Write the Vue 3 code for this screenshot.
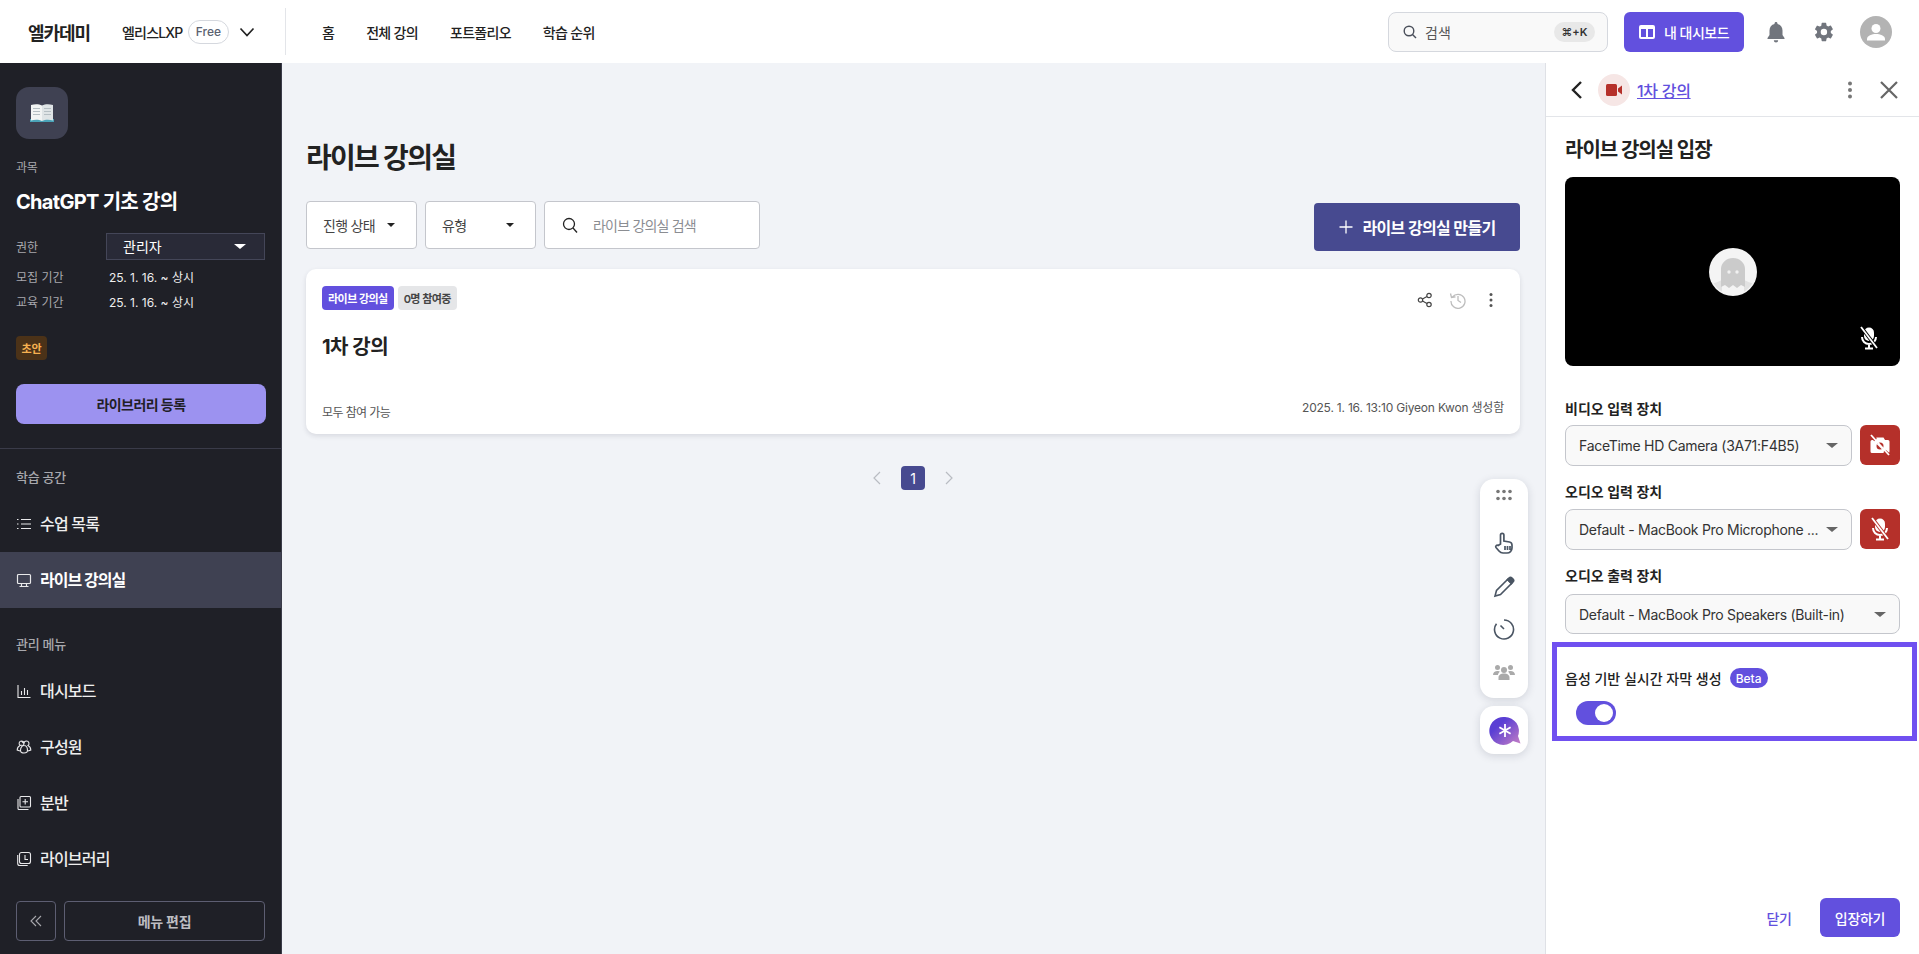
<script setup>
const menuA = [{ t: '수업 목록', i: 'list' }, { t: '라이브 강의실', i: 'monitor', active: true }]
const menuB = [{ t: '대시보드', i: 'chart' }, { t: '구성원', i: 'people' }, { t: '분반', i: 'copy' }, { t: '라이브러리', i: 'lib' }]
const nav = ['홈', '전체 강의', '포트폴리오', '학습 순위']
</script>

<template>
  <div class="page">
    <header class="top">
      <div class="logo">엘카데미</div>
      <div class="org">엘리스LXP</div>
      <div class="free">Free</div>
      <svg class="chev" width="16" height="16" viewBox="0 0 16 16" fill="none" stroke="#222" stroke-width="1.7"><path d="M1.5 4.5 8 11.5l6.5-7" /></svg>
      <div class="vline"></div>
      <nav class="nav"><a v-for="n in nav" :key="n">{{ n }}</a></nav>
      <div class="search">
        <svg width="16" height="16" viewBox="0 0 16 16" fill="none" stroke="#4a4f5a" stroke-width="1.4"><circle cx="7" cy="7" r="4.8" /><path d="m10.5 10.5 3.5 3.5" /></svg>
        <span class="stext">검색</span>
        <span class="kbd">⌘+K</span>
      </div>
      <button class="dash">
        <svg width="16" height="16" viewBox="0 0 16 16"><path fill="#fff" fill-rule="evenodd" d="M2 1h12a2 2 0 0 1 2 2v10a2 2 0 0 1-2 2H2a2 2 0 0 1-2-2V3a2 2 0 0 1 2-2Zm0 4v8h5V5Zm7 0v8h5V5Z" /></svg>
        내 대시보드
      </button>
      <svg class="tico" width="20" height="22" viewBox="0 0 20 22"><path fill="#71757d" d="M10 1c.9 0 1.5.6 1.5 1.5v.4C14.600 3.600 16.500 6.200 16.500 9.500V14l2 3v1h-17v-1l2-3V9.500c0-3.300 1.900-5.900 5-6.600v-.4C8.500 1.600 9.100 1 10 1ZM7.800 19.200h4.400a2.200 2.200 0 0 1-4.400 0Z" /></svg>
      <svg class="tico gear" width="22" height="22" viewBox="0 0 24 24"><path fill="#71757d" d="M19.400 13c.04-.33.06-.66.06-1s-.02-.67-.06-1l2.100-1.650a.5.500 0 0 0 .12-.64l-2-3.460a.5.500 0 0 0-.61-.22l-2.490 1a7.300 7.300 0 0 0-1.730-1l-.38-2.650A.5.500 0 0 0 13.920 2h-4a.5.500 0 0 0-.49.42L9.050 5.070a7.700 7.700 0 0 0-1.730 1l-2.490-1a.5.500 0 0 0-.61.22l-2 3.460a.5.500 0 0 0 .12.64L4.440 11a7.800 7.800 0 0 0 0 2l-2.100 1.650a.5.500 0 0 0-.12.64l2 3.460c.12.22.38.3.61.22l2.490-1c.53.41 1.110.74 1.730 1l.38 2.650c.04.24.25.42.49.42h4c.25 0 .45-.18.49-.42l.38-2.650a7.700 7.700 0 0 0 1.730-1l2.490 1c.23.08.49 0 .61-.22l2-3.460a.5.500 0 0 0-.12-.64ZM11.920 15.500a3.500 3.500 0 1 1 0-7 3.500 3.500 0 0 1 0 7Z" /></svg>
      <svg class="avatar" width="32" height="32" viewBox="0 0 32 32"><circle cx="16" cy="16" r="16" fill="#b3b3b3" /><circle cx="16" cy="12.500" r="4.500" fill="#fff" /><path fill="#fff" d="M7 23c0-3.500 5-5 9-5s9 1.500 9 5v1.500H7Z" /></svg>
    </header>

    <div class="body">
      <aside class="side">
        <div class="side-head">
          <div class="cover">
            <svg width="24" height="20" viewBox="0 0 24 20"><path fill="#4aa3b8" d="M0 16h24v3H0z" /><path fill="#f2f4f4" d="M1 2c4-1.200 8-1 11 .5V18c-3-1.500-7-1.700-11-.5Z" /><path fill="#dfe4e6" d="M23 2c-4-1.200-8-1-11 .5V18c3-1.500 7-1.700 11-.5Z" /><path stroke="#b5bec3" stroke-width="1" d="M3 5.500h7M3 8.500h7M3 11.500h7M14 5.500h7M14 8.500h7M14 11.500h7" /></svg>
          </div>
          <div class="eyebrow">과목</div>
          <h2 class="course">ChatGPT 기초 강의</h2>
          <div class="meta first">
            <span class="mk">권한</span>
            <div class="role"><span>관리자</span><i class="caret white"></i></div>
          </div>
          <div class="meta"><span class="mk">모집 기간</span><span class="mv">25. 1. 16. ~ 상시</span></div>
          <div class="meta second"><span class="mk">교육 기간</span><span class="mv">25. 1. 16. ~ 상시</span></div>
          <div class="draft">초안</div>
          <button class="reg">라이브러리 등록</button>
        </div>
        <div class="side-list">
          <div class="sec">학습 공간</div>
          <div v-for="m in menuA" :key="m.t" class="row" :class="{ active: m.active }">
            <svg width="16" height="16" viewBox="0 0 16 16" fill="none" stroke="#e8e8ea" stroke-width="1.200">
              <path v-if="m.i === 'list'" d="M5 3.500h10M5 8h10M5 12.500h10M1 3.500h1.500M1 8h1.500M1 12.500h1.500" />
              <path v-else d="M2.500 2.500h11a1 1 0 0 1 1 1v7a1 1 0 0 1-1 1h-11a1 1 0 0 1-1-1v-7a1 1 0 0 1 1-1ZM5.500 11.500v3h5v-3M3.500 14.500h9" />
            </svg>
            <span>{{ m.t }}</span>
          </div>
          <div class="sec sec2">관리 메뉴</div>
          <div v-for="m in menuB" :key="m.t" class="row">
            <svg width="16" height="16" viewBox="0 0 16 16" fill="none" stroke="#e8e8ea" stroke-width="1.100">
              <path v-if="m.i === 'chart'" d="M2 2v12.500h12.500M5.500 12V8M8.500 12V5M11.500 12V7" />
              <path v-else-if="m.i === 'people'" d="M5.500 2a2.500 2.500 0 0 1 2.500 2.500A2.500 2.500 0 0 1 10.500 2a2.500 2.500 0 0 1 1.500 4.500c2 1 2.800 3 2.800 4.500l-2.800 1M8 4.500a2.500 2.500 0 0 1-1 2c-2-.5-3 0-3-.1A2.500 2.500 0 0 1 5.500 2ZM8 6.500c2 0 3.500 2 3.500 5 0 2-1.500 2.500-3.500 2.500s-3.500-.5-3.500-2.500c0-3 1.500-5 3.500-5ZM4 6.500C2 7.500 1.200 9.500 1.200 11l2.800 1" />
              <path v-else-if="m.i === 'copy'" d="M5 1.500h8.500a1 1 0 0 1 1 1V11a1 1 0 0 1-1 1H5a1 1 0 0 1-1-1V2.500a1 1 0 0 1 1-1ZM2 4v9.500a1 1 0 0 0 1 1h9.500M9.200 4v5.500M6.500 6.700H12" />
              <path v-else d="M5.500 1.500h7a2 2 0 0 1 2 2v7a2 2 0 0 1-2 2h-7a2 2 0 0 1-2-2v-7a2 2 0 0 1 2-2ZM1.700 4v8.500a2 2 0 0 0 2 2h8M9 4v4.500h3" />
            </svg>
            <span>{{ m.t }}</span>
          </div>
        </div>
        <div class="side-foot">
          <button class="collapse">
            <svg width="14" height="14" viewBox="0 0 14 14" fill="none" stroke="#a8a8ad" stroke-width="1.100"><path d="M7 2 2 7l5 5M12 2 7 7l5 5" /></svg>
          </button>
          <button class="edit">메뉴 편집</button>
        </div>
      </aside>

      <main class="main">
        <h1 class="title">라이브 강의실</h1>
        <div class="filters">
          <div class="fbox w111"><span>진행 상태</span><i class="caret"></i></div>
          <div class="fbox w111"><span>유형</span><i class="caret"></i></div>
          <div class="fsearch">
            <svg width="18" height="18" viewBox="0 0 18 18" fill="none" stroke="#222" stroke-width="1.300"><circle cx="8" cy="8" r="5.500" /><path d="m12 12 4 4.500" /></svg>
            <span>라이브 강의실 검색</span>
          </div>
          <button class="create">
            <svg width="14" height="14" viewBox="0 0 14 14" stroke="#fff" stroke-width="1.300"><path d="M7 .5v13M.5 7h13" /></svg>
            라이브 강의실 만들기
          </button>
        </div>
        <section class="card">
          <div class="card-top">
            <div class="tags"><span class="tag p">라이브 강의실</span><span class="tag g">0명 참여중</span></div>
            <div class="acts">
              <svg width="16" height="16" viewBox="0 0 16 16" fill="none" stroke="#444" stroke-width="1.200"><circle cx="3.500" cy="8" r="2.200" /><circle cx="12" cy="3.500" r="2.200" /><circle cx="12" cy="12.500" r="2.200" /><path d="m5.500 7 4.500-2.500M5.500 9l4.500 2.500" /></svg>
              <svg width="18" height="18" viewBox="0 0 18 18" fill="none" stroke="#bdbdbd" stroke-width="1.300"><path d="M3.500 6A7 7 0 1 1 2 10M1.500 2.500 2.500 6.500l4-.7M9 5v4.500l3 2" /></svg>
              <svg width="16" height="16" viewBox="0 0 16 16" fill="#555"><circle cx="8" cy="2.500" r="1.500" /><circle cx="8" cy="8" r="1.500" /><circle cx="8" cy="13.500" r="1.500" /></svg>
            </div>
          </div>
          <h3 class="ctitle">1차 강의</h3>
          <div class="cfoot">
            <span class="open">모두 참여 가능</span>
            <span class="date">2025. 1. 16. 13:10 Giyeon Kwon 생성함</span>
          </div>
        </section>
        <div class="pager">
          <svg width="10" height="14" viewBox="0 0 10 14" fill="none" stroke="#b9bcc2" stroke-width="1.200"><path d="M8 1 2 7l6 6" /></svg>
          <span class="pg">1</span>
          <svg width="10" height="14" viewBox="0 0 10 14" fill="none" stroke="#b9bcc2" stroke-width="1.200"><path d="m2 1 6 6-6 6" /></svg>
        </div>

        <div class="float-wrap">
          <div class="tools">
            <svg width="18" height="12" viewBox="0 0 18 12" fill="#777"><circle cx="3" cy="2.500" r="1.800" /><circle cx="9" cy="2.500" r="1.800" /><circle cx="15" cy="2.500" r="1.800" /><circle cx="3" cy="9.500" r="1.800" /><circle cx="9" cy="9.500" r="1.800" /><circle cx="15" cy="9.500" r="1.800" /></svg>
            <svg class="t-hand" width="20" height="22" viewBox="0 0 20 22" fill="none" stroke="#4a5563" stroke-width="1.700"><path d="M6.500 12V3a1.700 1.700 0 0 1 3.400 0v6l5.600 1c1.500.3 2.500 1.300 2.500 3v3a5 5 0 0 1-5 5H9c-1.800 0-3-.8-4-2l-3-3.500c-1-1.500.8-3 2.200-2ZM11 14v4M13.500 14v4M16 14v4" /></svg>
            <svg class="t-pen" width="22" height="22" viewBox="0 0 22 22" fill="none" stroke="#4a5563" stroke-width="1.600"><path d="M14.500 3.500 3.500 14.500 2 20l5.500-1.500 11-11Z" /><path fill="#4a5563" d="M14.500 3.500 16 2c1-1 2-1 3 0l1 1c1 1 1 2 0 3l-1.500 1.500Z" /></svg>
            <svg class="t-timer" width="22" height="22" viewBox="0 0 22 22" fill="none" stroke="#4a5563" stroke-width="1.600"><path d="M11 2a9.500 9.500 0 1 1-7.500 3.700M11 11 7.500 7.500" /></svg>
            <svg class="t-ppl" width="22" height="16" viewBox="0 0 22 16" fill="#aaa"><circle cx="4.500" cy="3.500" r="2.500" /><circle cx="17.500" cy="3.500" r="2.500" /><circle cx="11" cy="6" r="3" /><path d="M0 11c0-2.500 2-4 4.500-4 1 0 2 .3 2.500.8C5.500 9 5 10 5 11Zm17 0c0-1-.5-2-2-3.200.500-.5 1.500-.8 2.500-.8C20 7 22 8.500 22 11ZM5.500 16v-2.500c0-2.500 2.500-4 5.500-4s5.500 1.500 5.500 4V16Z" /></svg>
          </div>
          <div class="assist">
            <svg class="a-logo" width="32" height="32" viewBox="0 0 32 32">
              <defs><linearGradient id="ag" x1="0" y1="0" x2="1" y2="1"><stop offset=".3" stop-color="#5a3fd4" /><stop offset="1" stop-color="#c67fc4" /></linearGradient></defs>
              <path fill="url(#ag)" d="M16 2a14 14 0 0 1 13 19l2.500 7.500-7.500-2.500A14 14 0 1 1 16 2Z" />
              <path stroke="#fff" stroke-width="1.800" d="M16 9v13M10.400 12.250l11.200 6.500M21.600 12.250l-11.200 6.500" />
            </svg>
          </div>
        </div>
      </main>

      <aside class="panel">
        <div class="p-head">
          <svg class="p-back" width="14" height="20" viewBox="0 0 14 20" fill="none" stroke="#222" stroke-width="2.400"><path d="M11 2 3 10l8 8" /></svg>
          <div class="p-ico">
            <svg width="16" height="12" viewBox="0 0 16 12" fill="#b5302a"><rect width="11" height="12" rx="1.500" /><path d="m12 4.500 4-3v9l-4-3Z" /></svg>
          </div>
          <a class="p-title">1차 강의</a>
          <svg class="p-dots" width="6" height="18" viewBox="0 0 6 18" fill="#777"><circle cx="3" cy="2.500" r="2" /><circle cx="3" cy="9" r="2" /><circle cx="3" cy="15.500" r="2" /></svg>
          <svg class="p-x" width="18" height="18" viewBox="0 0 18 18" stroke="#666" stroke-width="2.200"><path d="m1 1 16 16M17 1 1 17" /></svg>
        </div>
        <div class="p-body">
          <h2 class="p-h">라이브 강의실 입장</h2>
          <div class="video">
            <svg class="ghost" width="48" height="48" viewBox="0 0 48 48">
              <clipPath id="gc"><circle cx="24" cy="24" r="22.500" /></clipPath>
              <circle cx="24" cy="24" r="24" fill="#f4f4f4" />
              <g clip-path="url(#gc)">
                <path fill="#e2e2e2" d="M0 36c5 0 9-2 13-4v16H0Zm48 0c-5 0-9-2-13-4v16h13Z" />
                <path fill="#cbcbcb" d="M12 39V21a12 11 0 0 1 24 0v18l-4-2-4 3-4-3-4 3-4-3Z" />
                <circle cx="20" cy="24" r="1.700" fill="#f1f1f1" /><circle cx="28" cy="24" r="1.700" fill="#f1f1f1" />
              </g>
            </svg>
            <svg class="vmic" width="20" height="24" viewBox="0 0 20 24"><rect x="5" y="1.500" width="10" height="13.500" rx="5" fill="#fff" /><path fill="none" stroke="#fff" stroke-width="2" d="M3 11c0 4 3 7 7 7s7-3 7-7M10 18v4M6 22.500h8" /><path stroke="#000" stroke-width="3.600" d="m2 1 16 21" /><path stroke="#fff" stroke-width="1.800" d="m2 1 16 21" /></svg>
          </div>
          <label class="f-l l1">비디오 입력 장치</label>
          <div class="f-row">
            <div class="sel"><span>FaceTime HD Camera (3A71:F4B5)</span><i class="caret gray"></i></div>
            <button class="off">
              <svg width="24" height="24" viewBox="0 0 24 24"><path fill="#fff" d="M4 7h3l1.500-2.500h7L17 7h3a1.500 1.500 0 0 1 1.500 1.500v10A1.500 1.500 0 0 1 20 20H4a1.500 1.500 0 0 1-1.500-1.500v-10A1.500 1.500 0 0 1 4 7Z" /><circle cx="12" cy="13" r="3.500" fill="#b5302a" /><path stroke="#fff" stroke-width="1.800" d="m9.500 10.500 5 5" /><path stroke="#b5302a" stroke-width="3.600" d="m3 2 4.500 5M16.500 18l4.500 4" /><path stroke="#fff" stroke-width="1.800" d="m3 2 18 20" /></svg>
            </button>
          </div>
          <label class="f-l">오디오 입력 장치</label>
          <div class="f-row">
            <div class="sel"><span>Default - MacBook Pro Microphone ...</span><i class="caret gray"></i></div>
            <button class="off">
              <svg width="20" height="24" viewBox="0 0 20 24"><rect x="5" y="1.500" width="10" height="13.500" rx="5" fill="#fff" /><path fill="none" stroke="#fff" stroke-width="2" d="M3 11c0 4 3 7 7 7s7-3 7-7M10 18v4M6 22.500h8" /><path stroke="#b5302a" stroke-width="3.600" d="m2 1 16 21" /><path stroke="#fff" stroke-width="1.800" d="m2 1 16 21" /></svg>
            </button>
          </div>
          <label class="f-l l3">오디오 출력 장치</label>
          <div class="f-row">
            <div class="sel s3"><span>Default - MacBook Pro Speakers (Built-in)</span><i class="caret gray"></i></div>
          </div>
          <div class="hl">
            <div class="hl-t"><span>음성 기반 실시간 자막 생성</span><span class="beta">Beta</span></div>
            <div class="toggle"><i></i></div>
          </div>
          <div class="p-foot">
            <button class="close">닫기</button>
            <button class="enter">입장하기</button>
          </div>
        </div>
      </aside>
    </div>
  </div>
</template>

<style>
html, body { margin: 0; overflow: hidden; background: #fff; }
</style>

<style scoped>
* { box-sizing: border-box; }
.page { width: 1919px; height: 954px; display: flex; flex-direction: column; font-family: Inter, "Noto Sans CJK KR", sans-serif; color: #222; overflow: hidden; }
button { font-family: inherit; cursor: pointer; }
h1, h2, h3 { margin: 0; }

.top { height: 63px; flex: none; display: flex; align-items: center; background: #fff; padding-left: 28px; }
.logo { font-size: 18px; font-weight: 700; width: 94px; letter-spacing: -1.1px; }
.org { font-size: 14px; font-weight: 500; width: 66px; letter-spacing: -.8px; }
.free { width: 41px; height: 24px; border: 1px solid #d5d8de; border-radius: 12px; font-size: 12px; font-weight: 500; color: #5b6270; display: flex; align-items: center; justify-content: center; }
.chev { margin-left: 10px; }
.vline { width: 1px; height: 47px; background: #e3e5e9; margin-left: 30px; }
.nav { display: flex; gap: 32px; margin-left: 36px; font-size: 14px; font-weight: 500; letter-spacing: -.7px; }
.search { margin-left: auto; width: 220px; height: 40px; border: 1px solid #d5d8de; border-radius: 8px; background: #f9f9f9; display: flex; align-items: center; padding-left: 13px; font-size: 14px; color: #555; }
.stext { margin-left: 7px; }
.kbd { margin-left: auto; margin-right: 12px; width: 41px; height: 20px; border-radius: 10px; background: #e8e8e8; font-size: 11px; font-weight: 600; display: flex; align-items: center; justify-content: center; color: #333; }
.dash { width: 120px; height: 40px; margin-left: 16px; border: 0; border-radius: 6px; background: #6250de; color: #fff; font-size: 14px; font-weight: 500; letter-spacing: -.5px; display: flex; align-items: center; justify-content: center; gap: 9px; }
.tico { margin-left: 22px; flex: none; }
.gear { margin-left: 27px; }
.avatar { margin-left: 25px; margin-right: 27px; flex: none; }

.body { flex: 1; display: flex; min-height: 0; }

.side { width: 282px; flex: none; background: #1f2027; border-right: 1px solid #3a3b49; color: #fff; display: flex; flex-direction: column; }
.side-head { padding: 24px 16px; border-bottom: 1px solid #3a3b49; height: 386px; }
.cover { width: 52px; height: 52px; border-radius: 13px; background: #3f4152; display: flex; align-items: center; justify-content: center; }
.eyebrow { margin-top: 20px; font-size: 12px; line-height: 18px; color: #a8a8ad; letter-spacing: -.3px; }
.course { margin-top: 11px; font-size: 20px; line-height: 28px; font-weight: 700; letter-spacing: -.7px; }
.meta { display: flex; align-items: center; height: 20px; margin-top: 5px; font-size: 12px; }
.meta.first { height: 26px; margin-top: 17px; margin-bottom: 7px; }
.mk { width: 90px; color: #a8a8ad; flex: none; font-size: 12px; }
.mv { padding-left: 3px; color: #eee; font-size: 12px; }
.role { width: 161px; height: 27px; background: #292a37; border: 1px solid #444658; display: flex; align-items: center; justify-content: space-between; padding: 0 18px 0 16px; font-size: 14px; }
.draft { margin-top: 25px; width: 31px; height: 24px; border-radius: 4px; background: #4b3218; color: #f7b151; font-size: 11px; font-weight: 700; display: flex; align-items: center; justify-content: center; }
.reg { display: block; margin-top: 24px; width: 250px; height: 40px; border: 0; border-radius: 8px; background: #9c92f0; color: #1f2027; font-size: 14px; font-weight: 600; letter-spacing: -.6px; }
.side-list { padding-top: 18px; }
.sec { padding-left: 16px; height: 20px; line-height: 20px; font-size: 13px; font-weight: 500; color: #a8a8ad; margin-bottom: 9px; letter-spacing: -.3px; }
.sec2 { margin-top: 26px; margin-bottom: 9px; }
.row { height: 56px; display: flex; align-items: center; gap: 8px; padding-left: 16px; font-size: 16px; font-weight: 500; color: #eee; letter-spacing: -.8px; }
.row span { position: relative; top: -1px; }
.row.active { background: #3f4152; font-weight: 700; color: #fff; letter-spacing: -1px; }
.side-foot { margin-top: auto; padding: 0 16px 13px; display: flex; gap: 8px; }
.collapse { width: 40px; height: 40px; background: transparent; border: 1px solid #5d5e72; border-radius: 4px; display: flex; align-items: center; justify-content: center; padding: 0; }
.edit { width: 201px; height: 40px; background: transparent; border: 1px solid #5d5e72; border-radius: 4px; color: #bdbdc2; font-size: 14px; font-weight: 600; letter-spacing: -.3px; }

.main { flex: 1; position: relative; background: #f1f3f7; padding: 77px 25px 0 24px; min-width: 0; }
.title { font-size: 28px; line-height: 36px; font-weight: 700; letter-spacing: -1.7px; }
.filters { display: flex; margin-top: 25px; gap: 8px; height: 50px; }
.fbox { background: #fff; border: 1px solid #c4c6cc; border-radius: 4px; height: 48px; padding: 0 21px 0 16px; display: flex; align-items: center; justify-content: space-between; font-size: 14px; color: #444; letter-spacing: -.7px; }
.fbox .caret { border-left-width: 4px; border-right-width: 4px; border-top-width: 4px; }
.w111 { width: 111px; }
.fsearch { width: 216px; height: 48px; background: #fff; border: 1px solid #c4c6cc; border-radius: 4px; display: flex; align-items: center; padding-left: 16px; gap: 14px; font-size: 14px; color: #8b8d92; letter-spacing: -.8px; }
.create { margin-left: auto; margin-top: 2px; width: 206px; height: 48px; border: 0; border-radius: 4px; background: #474a90; color: #fff; font-size: 16px; font-weight: 600; letter-spacing: -.7px; display: flex; align-items: center; justify-content: center; gap: 10px; }
.caret { display: inline-block; width: 0; height: 0; border-left: 5px solid transparent; border-right: 5px solid transparent; border-top: 5px solid #222; }
.caret.white { border-top-color: #fff; border-left-width: 6px; border-right-width: 6px; }
.caret.gray { border-top-color: #666; border-left-width: 6px; border-right-width: 6px; }

.card { margin-top: 18px; height: 165px; background: #fff; border-radius: 10px; box-shadow: 0 2px 5px rgba(30, 35, 60, .12); padding: 17px 16px 0; }
.card-top { display: flex; justify-content: space-between; align-items: flex-start; height: 24px; }
.tags { display: flex; gap: 4px; }
.tag { height: 24px; padding: 0 6px; border-radius: 4px; font-size: 11px; font-weight: 600; display: flex; align-items: center; letter-spacing: -.55px; }
.tag.p { background: #6250de; color: #fff; }
.tag.g { background: #e5e6e8; color: #444; }
.acts { display: flex; align-items: center; gap: 16px; padding: 5px 5px 0 0; }
.ctitle { margin-top: 23px; font-size: 20px; line-height: 28px; font-weight: 700; letter-spacing: -.5px; }
.cfoot { margin-top: 39px; display: flex; justify-content: space-between; align-items: flex-end; font-size: 12px; color: #555; height: 22px; }
.open { line-height: 18px; letter-spacing: -.6px; }
.date { line-height: 18px; padding-bottom: 5px; letter-spacing: -.2px; }
.pager { margin-top: 32px; display: flex; align-items: center; justify-content: center; gap: 19px; }
.pg { width: 24px; height: 24px; border-radius: 4px; background: #474a90; color: #fff; font-size: 14px; display: flex; align-items: center; justify-content: center; }

.float-wrap { position: absolute; left: 1198px; top: 416px; width: 48px; display: flex; flex-direction: column; gap: 8px; }
.tools { height: 219px; background: #fff; border-radius: 14px; box-shadow: 0 2px 8px rgba(30, 35, 60, .15); display: flex; flex-direction: column; align-items: center; padding-top: 10px; }
.t-hand { margin-top: 31px; }
.t-pen { margin-top: 22px; }
.t-timer { margin-top: 20px; }
.t-ppl { margin-top: 24px; }
.assist { height: 48px; background: #fff; border-radius: 14px; box-shadow: 0 2px 8px rgba(30, 35, 60, .15); display: flex; align-items: center; justify-content: center; }
.a-logo { margin: 2px 0 0 2px; }

.panel { width: 374px; flex: none; background: #fff; border-left: 1px solid #dfe1e6; display: flex; flex-direction: column; }
.p-head { height: 54px; flex: none; border-bottom: 1px solid #e3e5e9; display: flex; align-items: center; padding-left: 24px; }
.p-ico { margin-left: 14px; width: 32px; height: 32px; border-radius: 50%; background: #f6e6e5; display: flex; align-items: center; justify-content: center; }
.p-title { margin-left: 7px; font-size: 16px; font-weight: 500; color: #6250de; text-decoration: underline; letter-spacing: -.3px; }
.p-dots { margin-left: auto; }
.p-x { margin-left: 27px; margin-right: 21px; }
.p-body { flex: 1; display: flex; flex-direction: column; padding: 20px 19px 17px 19px; }
.p-h { font-size: 20px; line-height: 26px; font-weight: 700; letter-spacing: -1px; }
.video { position: relative; margin-top: 14px; height: 189px; border-radius: 8px; background: #000; display: flex; align-items: center; justify-content: center; }
.vmic { position: absolute; right: 21px; bottom: 16px; }
.f-l { display: block; font-size: 14px; font-weight: 600; line-height: 20px; margin-top: 16px; margin-bottom: 7px; }
.l1 { margin-top: 33px; margin-bottom: 6px; }
.l3 { margin-bottom: 8px; }
.f-row { display: flex; gap: 8px; }
.sel { flex: 1; min-width: 0; height: 41px; background: #f9f9f9; border: 1px solid #c4c6cc; border-radius: 8px; padding: 0 13px; display: flex; align-items: center; justify-content: space-between; font-size: 14px; color: #333; letter-spacing: -.28px; white-space: nowrap; }
.s3 { height: 40px; }
.off { width: 40px; height: 40px; border: 0; border-radius: 6px; background: #b5302a; display: flex; align-items: center; justify-content: center; padding: 0; flex: none; }
.hl { margin: 8px -17px 0 -13px; height: 99px; border: 5px solid #7050f0; padding: 21px 0 0 8px; flex: none; }
.hl-t { display: flex; align-items: center; gap: 8px; font-size: 14px; font-weight: 500; height: 20px; }
.beta { width: 38px; height: 20px; border-radius: 10px; background: #6250de; color: #fff; font-size: 12px; display: flex; align-items: center; justify-content: center; }
.toggle { margin: 13px 0 0 11px; width: 40px; height: 24px; border-radius: 12px; background: #6250de; position: relative; }
.toggle i { position: absolute; right: 3px; top: 3px; width: 18px; height: 18px; border-radius: 50%; background: #fff; }
.p-foot { margin-top: auto; display: flex; justify-content: flex-end; align-items: center; gap: 20px; }
.close { background: none; border: 0; color: #6250de; font-size: 14px; font-weight: 500; width: 42px; padding: 0; letter-spacing: -.5px; }
.enter { width: 80px; height: 39px; border: 0; border-radius: 6px; background: #6250de; color: #fff; font-size: 14px; font-weight: 500; letter-spacing: -.3px; }
</style>
